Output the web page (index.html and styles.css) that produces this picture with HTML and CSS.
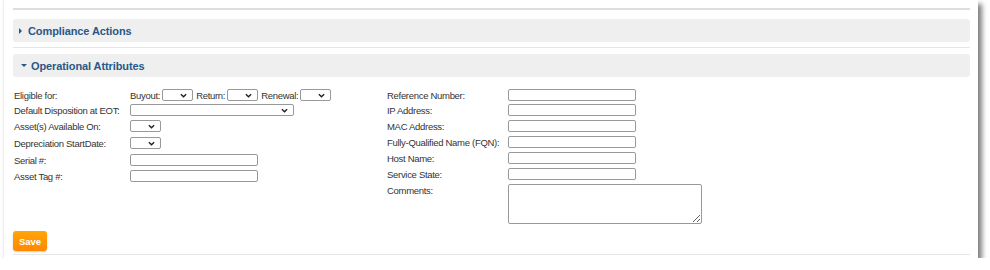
FILE: index.html
```html
<!DOCTYPE html>
<html lang="en">
<head>
  <meta charset="UTF-8">
  <title>Operational Attributes</title>
  <link rel="stylesheet" href="styles.css">
</head>
<body>
  <div class="panel">
    <div class="rule rule-top"></div>

    <div class="section-head">
      <span class="caret caret-right"></span>
      <span class="section-title">Compliance Actions</span>
    </div>
    <div class="rule"></div>

    <div class="section-head open">
      <span class="caret caret-down"></span>
      <span class="section-title">Operational Attributes</span>
    </div>

    <div class="form">
      <div class="col col-left">
        <div class="row">
          <label>Eligible for:</label>
          <div class="field inline">
            <span class="sub">Buyout:</span>
            <span class="select sm"><svg viewBox="0 0 8 5" width="7" height="5"><path d="M1 1 L4 4 L7 1" fill="none" stroke="#222" stroke-width="1.6"/></svg></span>
            <span class="sub">Return:</span>
            <span class="select sm"><svg viewBox="0 0 8 5" width="7" height="5"><path d="M1 1 L4 4 L7 1" fill="none" stroke="#222" stroke-width="1.6"/></svg></span>
            <span class="sub">Renewal:</span>
            <span class="select sm"><svg viewBox="0 0 8 5" width="7" height="5"><path d="M1 1 L4 4 L7 1" fill="none" stroke="#222" stroke-width="1.6"/></svg></span>
          </div>
        </div>
        <div class="row">
          <label>Default Disposition at EOT:</label>
          <span class="select wide"><svg viewBox="0 0 8 5" width="7" height="5"><path d="M1 1 L4 4 L7 1" fill="none" stroke="#222" stroke-width="1.6"/></svg></span>
        </div>
        <div class="row">
          <label>Asset(s) Available On:</label>
          <span class="select sm"><svg viewBox="0 0 8 5" width="7" height="5"><path d="M1 1 L4 4 L7 1" fill="none" stroke="#222" stroke-width="1.6"/></svg></span>
        </div>
        <div class="row">
          <label>Depreciation StartDate:</label>
          <span class="select sm"><svg viewBox="0 0 8 5" width="7" height="5"><path d="M1 1 L4 4 L7 1" fill="none" stroke="#222" stroke-width="1.6"/></svg></span>
        </div>
        <div class="row">
          <label>Serial #:</label>
          <input type="text" class="text">
        </div>
        <div class="row">
          <label>Asset Tag #:</label>
          <input type="text" class="text">
        </div>
      </div>

      <div class="col col-right">
        <div class="row">
          <label>Reference Number:</label>
          <input type="text" class="text">
        </div>
        <div class="row">
          <label>IP Address:</label>
          <input type="text" class="text">
        </div>
        <div class="row">
          <label>MAC Address:</label>
          <input type="text" class="text">
        </div>
        <div class="row">
          <label>Fully-Qualified Name (FQN):</label>
          <input type="text" class="text">
        </div>
        <div class="row">
          <label>Host Name:</label>
          <input type="text" class="text">
        </div>
        <div class="row">
          <label>Service State:</label>
          <input type="text" class="text">
        </div>
        <div class="row row-tall">
          <label>Comments:</label>
          <textarea class="comments"></textarea>
        </div>
      </div>
    </div>

    <div class="actions">
      <button class="save">Save</button>
    </div>
    <div class="rule rule-bottom"></div>
  </div>
</body>
</html>
```

FILE: styles.css
```css
body {
  margin: 0;
  background: #fff;
  font-family: "Liberation Sans", Arial, sans-serif;
  font-size: 9.5px;
  letter-spacing: -0.3px;
  color: #333;
}
.panel {
  margin-left: 3px;
  width: 957px;
  height: 258px;
  padding: 0 8px 0 9px;
  background: #fff;
  border-left: 1px solid #eee;
  box-shadow: 4px 4px 5px rgba(0,0,0,0.5);
  display: flex;
  flex-direction: column;
}
.rule {
  height: 1px;
  background: #e6e6e6;
  margin: 5px 0 6px;
}
.rule-top {
  height: 2px;
  background: #ddd;
  margin: 8px 0 9px;
}
.rule-bottom {
  margin: 3px 0 0;
}
.section-head {
  height: 23px;
  background: #efefef;
  border-radius: 3px;
  display: flex;
  align-items: center;
  padding-left: 6px;
}
.section-head.open {
  padding-left: 8px;
}
.section-title {
  font-weight: bold;
  font-size: 11px;
  letter-spacing: -0.1px;
  color: #2a5886;
}
.caret {
  width: 0;
  height: 0;
}
.caret-right {
  border-top: 3px solid transparent;
  border-bottom: 3px solid transparent;
  border-left: 3px solid #2a5886;
  margin-right: 6px;
}
.caret-down {
  border-left: 3px solid transparent;
  border-right: 3px solid transparent;
  border-top: 3px solid #2a5886;
  margin-right: 4px;
}
.form {
  display: flex;
  padding: 12px 0 0 1px;
}
.col-left {
  width: 373px;
}
.row {
  display: flex;
  align-items: flex-start;
  height: 16px;
}
.row label {
  flex: none;
  padding-top: 1px;
  white-space: nowrap;
}
.col-left .row label {
  width: 116px;
}
.col-right .row label {
  width: 121px;
}
.col-right .row:first-child {
  height: 15px;
}
.col-left .row:nth-child(2) {
  margin-top: -1px;
}
.col-left .row:nth-child(3),
.col-left .row:nth-child(4) {
  height: 17px;
}
.inline {
  display: flex;
  align-items: flex-start;
  gap: 3px;
}
.sub {
  padding-top: 1px;
  margin-right: -1px;
}
.select {
  box-sizing: border-box;
  height: 12px;
  border: 1px solid #999;
  border-radius: 2px;
  background: #fff;
  display: flex;
  align-items: center;
  justify-content: flex-end;
  padding-right: 5px;
}
.select.sm {
  width: 31px;
}
.select.wide {
  width: 164px;
}
.text {
  box-sizing: border-box;
  width: 128px;
  height: 12px;
  border: 1px solid #999;
  border-radius: 2px;
  padding: 0 2px;
  margin: 0;
  font-size: 10px;
}
.row-tall {
  height: auto;
}
.comments {
  box-sizing: border-box;
  width: 194px;
  height: 40px;
  border: 1px solid #999;
  border-radius: 2px;
  margin: 0;
  padding: 2px;
  font-family: inherit;
  font-size: 10px;
}
.actions {
  padding-top: 7px;
}
.save {
  width: 34px;
  height: 20px;
  border: none;
  border-radius: 3px;
  background: linear-gradient(#ffa50a, #ff8800);
  color: #fff;
  font-family: "Liberation Sans", Arial, sans-serif;
  font-weight: bold;
  font-size: 9.5px;
  padding: 0;
  box-shadow: 0 1px 2px rgba(0,0,0,0.2);
  cursor: pointer;
}
```
